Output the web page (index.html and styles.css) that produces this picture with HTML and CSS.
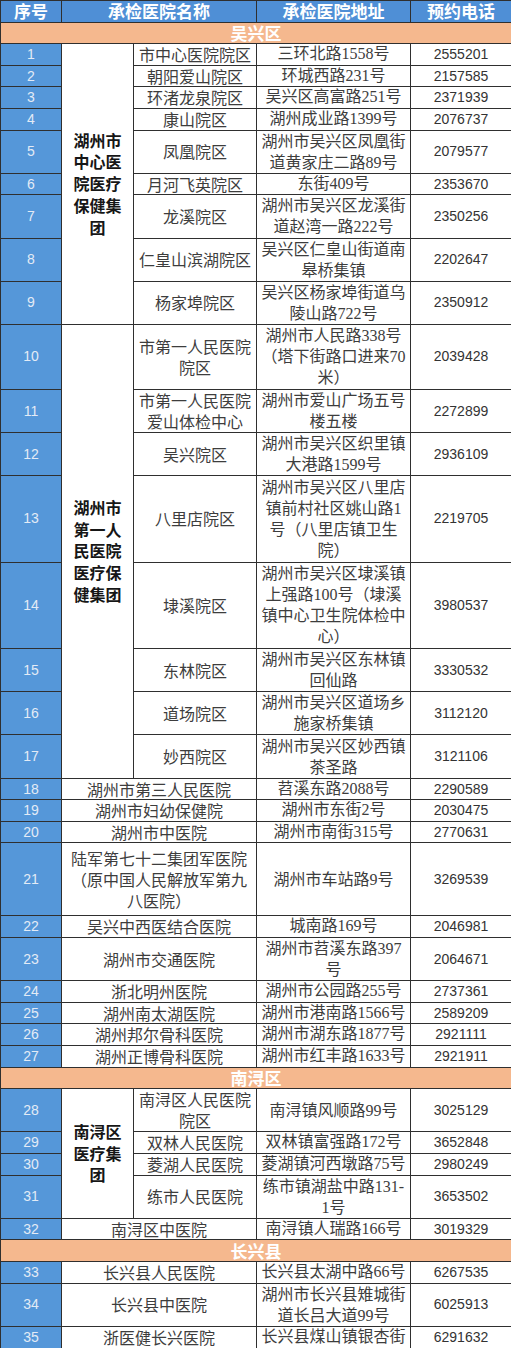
FILE: index.html
```html
<!DOCTYPE html>
<html lang="zh-CN">
<head>
<meta charset="utf-8">
<title>承检医院名单</title>
<link rel="stylesheet" href="styles.css">
</head>
<body>
<table class="sched">
  <colgroup>
    <col class="c-no"><col class="c-grp"><col class="c-name"><col class="c-addr"><col class="c-tel">
  </colgroup>
  <thead>
    <tr class="s hd"><th>序号</th><th colspan="2">承检医院名称</th><th>承检医院地址</th><th>预约电话</th></tr>
  </thead>
  <tbody>
    <tr class="s sec"><td colspan="5">吴兴区</td></tr>
    <tr class="s"><td class="no">1</td><td class="grp" rowspan="9">湖州市<br>中心医<br>院医疗<br>保健集<br>团</td><td>市中心医院院区</td><td class="addr">三环北路1558号</td><td class="tel">2555201</td></tr>
    <tr class="s"><td class="no">2</td><td>朝阳爱山院区</td><td class="addr">环城西路231号</td><td class="tel">2157585</td></tr>
    <tr class="s"><td class="no">3</td><td>环渚龙泉院区</td><td class="addr">吴兴区高富路251号</td><td class="tel">2371939</td></tr>
    <tr class="s"><td class="no">4</td><td>康山院区</td><td class="addr">湖州成业路1399号</td><td class="tel">2076737</td></tr>
    <tr class="d"><td class="no">5</td><td>凤凰院区</td><td class="addr">湖州市吴兴区凤凰街<br>道黄家庄二路89号</td><td class="tel">2079577</td></tr>
    <tr class="s"><td class="no">6</td><td>月河飞英院区</td><td class="addr">东街409号</td><td class="tel">2353670</td></tr>
    <tr class="d"><td class="no">7</td><td>龙溪院区</td><td class="addr">湖州市吴兴区龙溪街<br>道赵湾一路222号</td><td class="tel">2350256</td></tr>
    <tr class="d"><td class="no">8</td><td>仁皇山滨湖院区</td><td class="addr">吴兴区仁皇山街道南<br>皋桥集镇</td><td class="tel">2202647</td></tr>
    <tr class="d"><td class="no">9</td><td>杨家埠院区</td><td class="addr">吴兴区杨家埠街道乌<br>陵山路722号</td><td class="tel">2350912</td></tr>
    <tr class="t"><td class="no">10</td><td class="grp" rowspan="8">湖州市<br>第一人<br>民医院<br>医疗保<br>健集团</td><td>市第一人民医院<br>院区</td><td class="addr">湖州市人民路338号<br>（塔下街路口进来70<br>米）</td><td class="tel">2039428</td></tr>
    <tr class="d"><td class="no">11</td><td>市第一人民医院<br>爱山体检中心</td><td class="addr">湖州市爱山广场五号<br>楼五楼</td><td class="tel">2272899</td></tr>
    <tr class="d"><td class="no">12</td><td>吴兴院区</td><td class="addr">湖州市吴兴区织里镇<br>大港路1599号</td><td class="tel">2936109</td></tr>
    <tr class="q"><td class="no">13</td><td>八里店院区</td><td class="addr">湖州市吴兴区八里店<br>镇前村社区姚山路1<br>号（八里店镇卫生<br>院）</td><td class="tel">2219705</td></tr>
    <tr class="q"><td class="no">14</td><td>埭溪院区</td><td class="addr">湖州市吴兴区埭溪镇<br>上强路100号（埭溪<br>镇中心卫生院体检中<br>心）</td><td class="tel">3980537</td></tr>
    <tr class="d"><td class="no">15</td><td>东林院区</td><td class="addr">湖州市吴兴区东林镇<br>回仙路</td><td class="tel">3330532</td></tr>
    <tr class="d"><td class="no">16</td><td>道场院区</td><td class="addr">湖州市吴兴区道场乡<br>施家桥集镇</td><td class="tel">3112120</td></tr>
    <tr class="d"><td class="no">17</td><td>妙西院区</td><td class="addr">湖州市吴兴区妙西镇<br>茶圣路</td><td class="tel">3121106</td></tr>
    <tr class="s"><td class="no">18</td><td colspan="2">湖州市第三人民医院</td><td class="addr">苕溪东路2088号</td><td class="tel">2290589</td></tr>
    <tr class="s"><td class="no">19</td><td colspan="2">湖州市妇幼保健院</td><td class="addr">湖州市东街2号</td><td class="tel">2030475</td></tr>
    <tr class="s"><td class="no">20</td><td colspan="2">湖州市中医院</td><td class="addr">湖州市南街315号</td><td class="tel">2770631</td></tr>
    <tr class="x"><td class="no">21</td><td colspan="2">陆军第七十二集团军医院<br>（原中国人民解放军第九<br>八医院）</td><td class="addr">湖州市车站路9号</td><td class="tel">3269539</td></tr>
    <tr class="s"><td class="no">22</td><td colspan="2">吴兴中西医结合医院</td><td class="addr">城南路169号</td><td class="tel">2046981</td></tr>
    <tr class="d"><td class="no">23</td><td colspan="2">湖州市交通医院</td><td class="addr">湖州市苕溪东路397<br>号</td><td class="tel">2064671</td></tr>
    <tr class="s"><td class="no">24</td><td colspan="2">浙北明州医院</td><td class="addr">湖州市公园路255号</td><td class="tel">2737361</td></tr>
    <tr class="s"><td class="no">25</td><td colspan="2">湖州南太湖医院</td><td class="addr">湖州市港南路1566号</td><td class="tel">2589209</td></tr>
    <tr class="s"><td class="no">26</td><td colspan="2">湖州邦尔骨科医院</td><td class="addr">湖州市湖东路1877号</td><td class="tel">2921111</td></tr>
    <tr class="s"><td class="no">27</td><td colspan="2">湖州正博骨科医院</td><td class="addr">湖州市红丰路1633号</td><td class="tel">2921911</td></tr>
    <tr class="s sec"><td colspan="5">南浔区</td></tr>
    <tr class="d"><td class="no">28</td><td class="grp" rowspan="4">南浔区<br>医疗集<br>团</td><td>南浔区人民医院<br>院区</td><td class="addr">南浔镇风顺路99号</td><td class="tel">3025129</td></tr>
    <tr class="s"><td class="no">29</td><td>双林人民医院</td><td class="addr">双林镇富强路172号</td><td class="tel">3652848</td></tr>
    <tr class="s"><td class="no">30</td><td>菱湖人民医院</td><td class="addr">菱湖镇河西墩路75号</td><td class="tel">2980249</td></tr>
    <tr class="d"><td class="no">31</td><td>练市人民医院</td><td class="addr">练市镇湖盐中路131-<br>1号</td><td class="tel">3653502</td></tr>
    <tr class="s"><td class="no">32</td><td colspan="2">南浔区中医院</td><td class="addr">南浔镇人瑞路166号</td><td class="tel">3019329</td></tr>
    <tr class="s sec"><td colspan="5">长兴县</td></tr>
    <tr class="s"><td class="no">33</td><td colspan="2">长兴县人民医院</td><td class="addr">长兴县太湖中路66号</td><td class="tel">6267535</td></tr>
    <tr class="d"><td class="no">34</td><td colspan="2">长兴县中医院</td><td class="addr">湖州市长兴县雉城街<br>道长吕大道99号</td><td class="tel">6025913</td></tr>
    <tr class="s last"><td class="no">35</td><td colspan="2">浙医健长兴医院</td><td class="addr">长兴县煤山镇银杏街</td><td class="tel">6291632</td></tr>
  </tbody>
</table>
</body>
</html>
```

FILE: styles.css
```css
html, body {
  margin: 0;
  padding: 0;
  background: #ffffff;
}

.sched {
  width: 511px;
  table-layout: fixed;
  border-collapse: collapse;
  font-family: "Noto Sans CJK SC", sans-serif;
  font-size: 16px;
  line-height: 20.5px;
  color: #3d3d3d;
}

.c-no { width: 61px; }
.c-grp { width: 72px; }
.c-name { width: 123px; }
.c-addr { width: 154px; }
.c-tel { width: 101px; }

.sched th,
.sched td {
  border: 1px solid #2f2f2f;
  padding: 0;
  text-align: center;
  vertical-align: middle;
  white-space: nowrap;
}

.s { height: 21.6px; }
.d { height: 43.2px; }
.t { height: 65px; }
.q { height: 86.4px; }
.x { height: 73px; }
.last { height: 23px; }

.d td,
.t td,
.q td,
.x td {
  line-height: 21px;
}

.hd th {
  background: #4f8fd6;
  color: #ffffff;
  font-weight: 700;
  font-size: 17px;
  line-height: 20px;
}

.sec td {
  background: #f5b88e;
  color: #ffffff;
  font-weight: 700;
  font-size: 17px;
  line-height: 20px;
}

.sched td.no {
  background: #5597d9;
  color: #e3ebf6;
  font-family: "Liberation Sans", "Noto Sans CJK SC", sans-serif;
  font-size: 14px;
}

.sched td.grp {
  font-weight: 700;
  color: #161616;
  line-height: 21.7px;
}

.sched td.addr {
  font-family: "Liberation Serif", "Noto Sans CJK SC", serif;
}

.sched td.tel {
  font-family: "Liberation Sans", sans-serif;
  font-size: 14px;
  color: #333333;
}
```
